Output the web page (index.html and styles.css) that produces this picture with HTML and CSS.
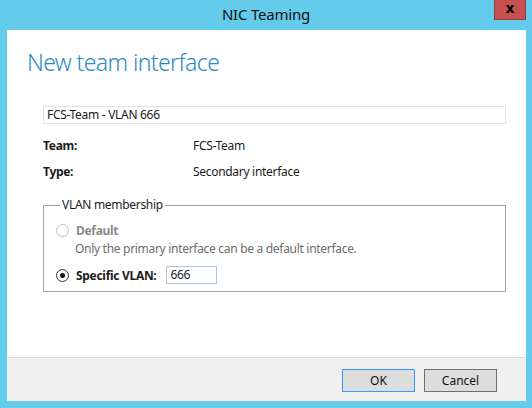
FILE: index.html
```html
<!DOCTYPE html>
<html>
<head>
<meta charset="utf-8">
<link rel="stylesheet" href="styles.css">
</head>
<body>
<div class="frame">
  <div class="titlebar">
    <span class="title">NIC Teaming</span>
    <div class="close">x</div>
  </div>
  <div class="window">
    <div class="content">
      <h1 class="heading">New team interface</h1>
      <div class="namebox">FCS-Team - VLAN 666</div>
      <div class="props">
        <div class="prop"><span class="key">Team:</span><span class="val">FCS-Team</span></div>
        <div class="prop"><span class="key">Type:</span><span class="val">Secondary interface</span></div>
      </div>
      <fieldset class="group">
        <legend class="legend">VLAN membership</legend>
        <div class="option disabled">
          <span class="radio"></span><span class="optlabel">Default</span>
        </div>
        <div class="hint">Only the primary interface can be a default interface.</div>
        <div class="option specific">
          <span class="radio checked"></span><span class="optlabel">Specific VLAN:</span>
          <span class="vlanbox">666</span>
        </div>
      </fieldset>
    </div>
    <div class="footer">
      <button class="btn default">OK</button>
      <button class="btn">Cancel</button>
    </div>
  </div>
</div>
</body>
</html>
```
FILE: styles.css
```css
html, body {
  margin: 0;
  padding: 0;
}
body {
  width: 532px;
  height: 408px;
  background: #65cbea;
  font-family: "Noto Sans", "Open Sans", sans-serif;
  font-size: 12px;
  letter-spacing: -0.3px;
  color: #1b1b1b;
  overflow: hidden;
}
.frame {
  display: flex;
  flex-direction: column;
  height: 408px;
}
.titlebar {
  position: relative;
  height: 30px;
  display: flex;
  justify-content: center;
  align-items: center;
}
.title {
  font-size: 15px;
  letter-spacing: -0.2px;
  color: #111;
  margin-top: -2px;
}
.close {
  position: absolute;
  top: 0;
  right: 6px;
  width: 30px;
  height: 19px;
  background: #c75050;
  border: 1px solid #8e3f3f;
  border-top: none;
  color: #000;
  font-weight: bold;
  font-family: "DejaVu Sans", sans-serif;
  font-size: 14px;
  letter-spacing: 0;
  line-height: 16px;
  text-align: center;
}
.window {
  margin: 0 6px 7px 7px;
  flex: 1;
  background: #fff;
  display: flex;
  flex-direction: column;
}
.content {
  flex: 1;
  padding: 0 20px 0 36px;
}
.heading {
  margin: 17px 0 0 -16px;
  font-weight: 300;
  font-size: 23px;
  letter-spacing: -0.6px;
  color: #2a8ac2;
  line-height: 30px;
  height: 30px;
}
.namebox {
  margin-top: 29px;
  height: 16px;
  border: 1px solid #e1e1ea;
  padding: 0 3px;
  line-height: 16px;
}
.props {
  margin-top: 14px;
}
.prop {
  display: flex;
  height: 26px;
  line-height: 16px;
}
.key {
  width: 150px;
  font-weight: bold;
}
.group {
  margin: 8px 0 0 0;
  border: 1px solid #a3a3a3;
  padding: 4px 0 0 12px;
  height: 88px;
}
.legend {
  padding: 0 2px;
  margin-left: 4px;
  line-height: 14px;
}
.option {
  display: flex;
  align-items: center;
  height: 20px;
  margin-top: 4px;
}
.option.disabled {
  color: #8a8a8a;
}
.radio {
  width: 11px;
  height: 11px;
  border: 1px solid #333;
  border-radius: 50%;
  margin-right: 7px;
  box-sizing: content-box;
  display: flex;
  align-items: center;
  justify-content: center;
}
.disabled .radio {
  border-color: #c0c0c0;
}
.radio.checked::after {
  content: "";
  width: 5px;
  height: 5px;
  border-radius: 50%;
  background: #111;
}
.optlabel {
  font-weight: bold;
}
.hint {
  color: #6d6d6d;
  padding-left: 19px;
  line-height: 16px;
  margin-top: 1px;
}
.vlanbox {
  margin-left: 10px;
  width: 43px;
  height: 16px;
  border: 1px solid #aac7e4;
  padding: 0 3px;
  line-height: 16px;
}
.option.specific {
  margin-top: 8px;
}
.footer {
  height: 43px;
  background: #f0f0f0;
  border-top: 1px solid #dcdcdc;
  display: flex;
  justify-content: flex-end;
  align-items: center;
  gap: 9px;
  padding-right: 29px;
}
.btn {
  width: 73px;
  height: 23px;
  background: #dddddd;
  border: 1px solid #707070;
  font-family: inherit;
  font-size: 12px;
  color: #111;
  padding: 0;
  margin-top: 1px;
}
.btn.default {
  border-color: #3399ff;
}
```
